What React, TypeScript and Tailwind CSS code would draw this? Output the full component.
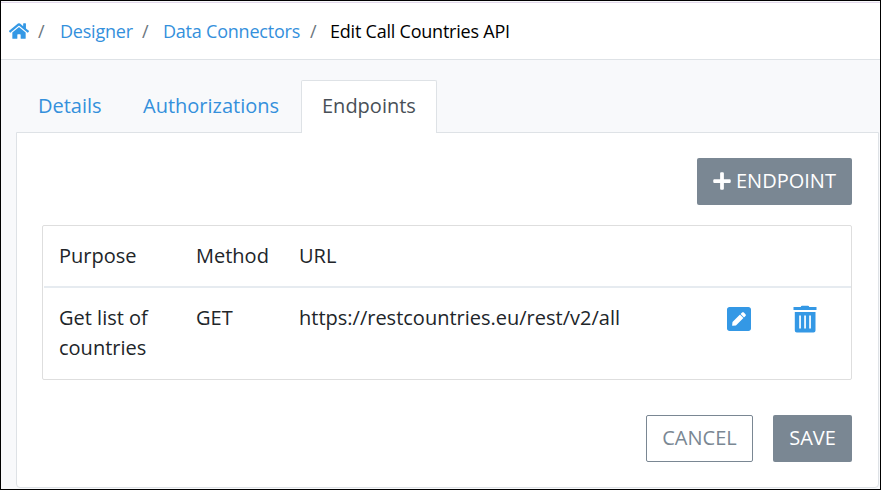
import { FaHome, FaPenSquare, FaPlus } from "react-icons/fa";

function TrashIcon() {
  return (
    <svg width="24" height="28" viewBox="0 0 24 28" fill="#3498e5" aria-label="Delete">
      <path d="M.5 2h7.2q.3-1.3 1.5-1.3h5.6q1.2 0 1.5 1.3h7.2v3H.5z" />
      <path
        fillRule="evenodd"
        d="M1.8 7h20.7v18.4a2 2 0 0 1-2 2H3.8a2 2 0 0 1-2-2zM6.2 10.4v13.2h1.7v-13.2zM11.2 10.4v13.2h1.7v-13.2zM16.2 10.4v13.2h1.7v-13.2z"
      />
    </svg>
  );
}

export default function App() {
  return (
    <div className="flex h-[490px] w-[881px] flex-col overflow-hidden border border-black bg-[#f8f9fb] font-['Open_Sans',sans-serif] text-[20px] leading-[30px] font-normal text-[#212529]">
      <nav className="mt-px flex h-[58px] shrink-0 items-center border-y border-t-[#e3d9ec] border-b-[#dee2e6] bg-white pl-2 text-[18px] leading-[27px] tracking-[-0.22px] text-[#3490dc]">
        <FaHome className="h-[18px] w-5 shrink-0 text-[#3498e5]" />
        <span className="w-[31px] pl-[9px] text-[#6c757d]">/</span>
        <a className="w-[82px] whitespace-nowrap">Designer</a>
        <span className="w-[21px] text-[#6c757d]">/</span>
        <a className="w-[147px] whitespace-nowrap">Data Connectors</a>
        <span className="w-[20px] text-[#6c757d]">/</span>
        <span className="whitespace-nowrap text-black">Edit Call Countries API</span>
      </nav>
      <main className="flex flex-1 flex-col pt-5 pr-px pl-[15px]">
        <div className="z-10 flex h-[53px] shrink-0 text-[#3490dc]">
          <a className="w-[106px] pt-[11px] pl-[22px]">Details</a>
          <a className="w-[179px] pt-[11px] pl-[21px]">Authorizations</a>
          <a className="w-[136px] rounded-t-xs border border-b-0 border-[#dee2e6] bg-white pt-[10px] pl-5 text-[#495057]">
            Endpoints
          </a>
        </div>
        <section className="-mt-px flex h-[356px] flex-col rounded-b border border-[#dee2e6] bg-white pt-[25px] pr-[26px] pl-[25px]">
          <button className="flex h-[47px] w-[155px] shrink-0 items-center self-end rounded-xs bg-[#7a8793] pl-4 text-white">
            <FaPlus className="mr-[5px] -mt-0.5 h-5 w-[18px]" />
            <span className="-mt-0.5">ENDPOINT</span>
          </button>
          <div className="mt-5 h-[155px] shrink-0 rounded-xs border border-[#dedede] px-4">
            <div className="-mr-4 -ml-[15px] flex h-[62px] border-b-2 border-[#e6ebf0] pt-[15px] pl-[15px]">
              <span className="w-[137px]">Purpose</span>
              <span className="w-[103px]">Method</span>
              <span>URL</span>
            </div>
            <div className="flex pt-[15px]">
              <span className="w-[137px] pr-6">Get list of countries</span>
              <span className="w-[103px]">GET</span>
              <span className="w-[428px]">https://restcountries.eu/rest/v2/all</span>
              <FaPenSquare className="mt-0.5 h-[28px] w-6 shrink-0 text-[#3498e5]" />
              <span className="ml-[42px] pt-[2px]">
                <TrashIcon />
              </span>
            </div>
          </div>
          <div className="mt-[35px] flex justify-end gap-5">
            <button className="h-[47px] w-[107px] rounded-xs border border-[#7a8793] pb-px text-[#7a8793]">
              CANCEL
            </button>
            <button className="h-[47px] w-[79px] rounded-xs bg-[#7a8793] pb-px text-white">SAVE</button>
          </div>
        </section>
      </main>
    </div>
  );
}
